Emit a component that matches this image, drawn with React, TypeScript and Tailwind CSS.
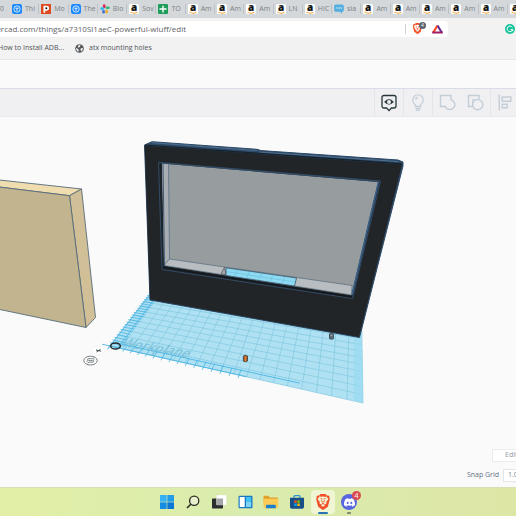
import React from "react";
import {SiBrave, SiDiscord} from "react-icons/si";

interface Tab {
    icon: "amazon" | "tinker" | "patreon" | "slack" | "sheets" | "chat";
    title: string;
}

const tabs: Tab[] = [
    {icon: "tinker", title: "Thi"},
    {icon: "patreon", title: "Mo"},
    {icon: "tinker", title: "The"},
    {icon: "slack", title: "Blo"},
    {icon: "amazon", title: "Sov"},
    {icon: "sheets", title: "TO"},
    {icon: "amazon", title: "Am"},
    {icon: "amazon", title: "Am"},
    {icon: "amazon", title: "Am"},
    {icon: "amazon", title: "LN"},
    {icon: "amazon", title: "HIC"},
    {icon: "chat", title: "sla"},
    {icon: "amazon", title: "Am"},
    {icon: "amazon", title: "Am"},
    {icon: "amazon", title: "Am"},
    {icon: "amazon", title: "Am"},
    {icon: "amazon", title: "Am"},
    {icon: "amazon", title: "Am"},
];

function Favicon({icon}: { icon: Tab["icon"] }) {
    return (
        <svg viewBox="0 0 10 10" className="w-[10px] h-[10px] shrink-0 overflow-visible">
            {icon === "amazon" && (
                <>
                    <rect width="10" height="10" rx="1.5" fill="#fff"/>
                    <text x="5" y="7" fontSize="10" fontWeight="800" textAnchor="middle" fontFamily="Open Sans, sans-serif" fill="#111">a</text>
                    <path d="M1.4 7.9 Q5 10.4 8.4 8.1" stroke="#f5a13a" strokeWidth="1.1" fill="none"/>
                </>
            )}
            {icon === "tinker" && (
                <>
                    <rect width="10" height="10" rx="2.2" fill="#1787fb"/>
                    <circle cx="5" cy="5" r="3.2" fill="none" stroke="#fff" strokeWidth=".8"/>
                    <path d="M3.4 4.2h3.2M5 4.2v2.7" stroke="#fff" strokeWidth=".9"/>
                </>
            )}
            {icon === "patreon" && (
                <>
                    <rect width="10" height="10" fill="#dd4a22"/>
                    <path d="M2.5 1.8h3.2a2.4 2.4 0 0 1 0 4.9H4.2v2H2.5z" fill="#fff"/>
                    <circle cx="5.3" cy="4.2" r="1" fill="#111"/>
                </>
            )}
            {icon === "slack" && (
                <g strokeWidth="2.6" strokeLinecap="round">
                    <path d="M4.2 1.6v1.4" stroke="#e0234f"/>
                    <path d="M1.6 4.6h1.4" stroke="#36b9e8"/>
                    <path d="M6.9 3.8h1.6" stroke="#2fb67c"/>
                    <path d="M6.6 6.8v1.4" stroke="#ecb22e"/>
                    <path d="M3.6 7.3v1" stroke="#3f6fd8"/>
                </g>
            )}
            {icon === "sheets" && (
                <>
                    <rect width="10" height="10" rx="1" fill="#1e9e5a"/>
                    <path d="M1.5 5h7M5 1.8v6.6" stroke="#fff" strokeWidth="1.4"/>
                </>
            )}
            {icon === "chat" && (
                <>
                    <path d="M1.5.5h7Q9.8.5 9.8 2v4.2q0 1.5-1.3 1.5H8v2L5.8 7.7H1.5Q.2 7.7.2 6.2V2Q.2.5 1.5.5z" fill="#55aee0"/>
                    <path d="M2.5 3l1 1-1 1M4.6 3l1 1-1 1M6.6 3l1 1-1 1" stroke="#e4f3fb" strokeWidth=".8" fill="none"/>
                </>
            )}
        </svg>
    );
}

function TabStrip() {
    return (
        <div className="h-[18px] bg-[#d4d8db] flex overflow-hidden text-[7px] text-[#7b8084]">
            <div className="w-[9px] shrink-0 flex items-center">0</div>
            <div className="flex flex-1 min-w-0 -mr-5">
                {tabs.map((tab, i) => (
                    <button key={i} className="flex-1 basis-0 min-w-0 flex items-center gap-[3px] pl-[3px] relative">
                        {i > 0 && <span className="absolute left-0 top-1 bottom-1 w-px bg-[#bcc1c5]"></span>}
                        <Favicon icon={tab.icon}/>
                        <span className="whitespace-nowrap">{tab.title}</span>
                    </button>
                ))}
            </div>
        </div>
    );
}

function AddressBar() {
    return (
        <div className="h-[21px] bg-[#f2f2f2] flex items-center">
            <div className="flex-1 h-4 bg-white rounded-r-sm flex items-center justify-between pr-[5px]">
                <div className="w-[186px] flex justify-end overflow-hidden whitespace-nowrap text-[8px] text-[#5f6367]">
                    <span>ercad.com/things/a7310Sl1aeC-powerful-wluff/edit</span>
                </div>
                <div className="flex items-center gap-[6px]">
                    <span className="w-px h-[10px] bg-[#cfd2d4]"></span>
                    <button className="relative w-[14px]" aria-label="Brave Shields">
                        <SiBrave className="w-[11px] h-[11px] text-[#f4532a]"/>
                        <span className="absolute right-0 -top-px w-[7px] h-[7px] rounded-full bg-[#59636d] text-white text-[5px] leading-[7px] text-center">4</span>
                    </button>
                    <button aria-label="Rewards">
                        <svg viewBox="0 0 11 10" className="w-[11px] h-[10px]">
                            <path d="M5.5 1.500L1.200 8.600" stroke="#ff4724" strokeWidth="2.100"/>
                            <path d="M5.500 1.500l4.300 7.100" stroke="#662d91" strokeWidth="2.100"/>
                            <path d="M.2 8.500h10.600" stroke="#9e1f63" strokeWidth="2"/>
                        </svg>
                    </button>
                </div>
            </div>
            <div className="w-[68px] flex justify-end pr-px">
                <svg viewBox="0 0 10 10" className="w-[10px] h-[10px]">
                    <circle cx="5" cy="5" r="5" fill="#15c39a"/>
                    <path d="M7.3 3.3A2.8 2.8 0 1 0 7.7 5.6H5.6M7.7 5.6v1.6" stroke="#fff" strokeWidth="1" fill="none"/>
                </svg>
            </div>
        </div>
    );
}

function Bookmarks() {
    return (
        <div className="h-[21px] bg-[#f2f2f2] border-b border-[#e6e7e8] flex items-center pb-px text-[7px] text-[#4f5357]">
            <a href="#adb" className="w-16 whitespace-nowrap flex justify-end">How to Install ADB...</a>
            <a href="#atx" className="ml-[11px] flex items-center gap-[5px] whitespace-nowrap">
                <svg viewBox="0 0 10 10" className="w-[9px] h-[9px]">
                    <circle cx="5" cy="5" r="4.8" fill="#555a5f"/>
                    <path d="M1.2 4.2L4 6.2v2.4Q1 7.8 1.2 4.2zM4 1.2l2.2.3L5 3.6 3 4zM6.6 4.6l2.2-.2Q8.8 7 7 8.2L6 6z" fill="#f2f2f2"/>
                </svg>
                atx mounting holes
            </a>
        </div>
    );
}

function EditorToolbar() {
    return (
        <div className="h-[29px] bg-[#f0f0f2] border-t border-b border-t-[#d9dbe6] border-b-[#e9e9ec] flex justify-end overflow-hidden text-[#c3cdd8]">
            <div className="flex -mr-[3px]">
                <button className="w-[29px] border-l border-[#e3e5e9] flex items-center justify-center" aria-label="Notes">
                    <svg viewBox="0 0 16 18" className="w-4 h-[18px]" fill="none" stroke="#27373a" strokeWidth="1.3">
                        <path d="M3 1.5h10q2 0 2 2v8.5q0 2-2 2h-2.6L8 16.6 5.600 14H3q-2 0-2-2V3.500q0-2 2-2z"/>
                        <path d="M3.500 7.900Q8 3 12.500 7.900 8 12.600 3.500 7.900z" fill="#27373a" strokeWidth=".6"/>
                        <circle cx="8" cy="7.900" r="2" fill="#f0f0f2" stroke="none"/>
                    </svg>
                </button>
                <button className="w-[29px] border-l border-[#e3e5e9] flex items-center justify-center" aria-label="Hints">
                    <svg viewBox="0 0 14 18" className="w-[14px] h-[18px]" fill="none" stroke="currentColor" strokeWidth="1.3">
                        <path d="M4.500 12.500Q4.500 10.500 3 9.400A5.200 5.200 0 1 1 11 9.400Q9.500 10.500 9.500 12.500z"/>
                        <path d="M4.500 14.500h5M5.200 16.400h3.600M4.500 5.500Q5 3.800 6.700 3.500"/>
                    </svg>
                </button>
                <button className="w-[29px] border-l border-[#e3e5e9] flex items-center justify-center" aria-label="Group">
                    <svg viewBox="0 0 17 17" className="w-[17px] h-[17px]" fill="none" stroke="currentColor" strokeWidth="1.4">
                        <path d="M1.500 1.500h10.500v4.200A5 5 0 1 1 6.200 12.500H1.500z"/>
                    </svg>
                </button>
                <button className="w-[29px] flex items-center justify-center" aria-label="Ungroup">
                    <svg viewBox="0 0 17 17" className="w-[17px] h-[17px]" fill="none" stroke="currentColor" strokeWidth="1.4">
                        <path d="M5.500 12.500H1.500v-11h10.500v4"/>
                        <path d="M5.500 12.500V5.500H12" strokeWidth=".8"/>
                        <circle cx="10.700" cy="10.700" r="5.100"/>
                    </svg>
                </button>
                <button className="w-[29px] border-l border-[#e3e5e9] flex items-center justify-center" aria-label="Align">
                    <svg viewBox="0 0 14 17" className="w-[14px] h-[17px]" fill="none" stroke="currentColor" strokeWidth="1.400">
                        <path d="M1.200.5v16M4.200 3h8.600v4.200H4.200zM4.200 10.300h5v3.400h-5z"/>
                    </svg>
                </button>
            </div>
        </div>
    );
}

// perspective mapping of the unit square onto the workplane corners
function project(u: number, v: number) {
    const g = -0.218;
    const h = 0.358;
    const w = 1 + g * u + h * v;
    const x = (110 + (363 * (1 + g) - 110) * u + (175 * (1 + h) - 110) * v) / w;
    const y = (346 + (403 * (1 + g) - 346) * u + (262 * (1 + h) - 346) * v) / w;
    return `${x.toFixed(2)} ${y.toFixed(2)}`;
}

function gridPath(count: number) {
    let d = "";
    for (let i = 0; i <= count; i++) {
        const t = i / count;
        d += `M${project(t, 0)}L${project(t, 1)}M${project(0, t)}L${project(1, t)}`;
    }
    return d;
}

function rulerPath() {
    let d = "";
    for (let i = 0; i < 40; i++) {
        const t = i / 40;
        d += `M${project(-0.01, t)}L${project(0.05, t)}`;
    }
    for (let i = 0; i < 17; i++) {
        const t = i / 28;
        d += `M${project(t, -0.02)}L${project(t, 0.04)}`;
    }
    return d;
}

function Scene() {
    return (
        <svg viewBox="0 117 516 370" className="block w-full h-auto">
            {/* workplane */}
            <path d={`M${project(0, 0)}L${project(1, 0)}L${project(1, 1)}L${project(0, 1)}z`} fill="#b2e3f4"/>
            <path d={gridPath(80)} stroke="#8bd0e8" strokeWidth=".3" opacity=".3"/>
            <path d={gridPath(20)} stroke="#7cc4dd" strokeWidth=".6"/>
            <path d={rulerPath()} stroke="#4bb5e3" strokeWidth=".8"/>
            <path d={`M${project(-0.04, 0)}L${project(0.6, 0)}M${project(0, -0.03)}L${project(0, 1)}M${project(0.04, 0.035)}L${project(0.79, 0.035)}M${project(0.04, 0.035)}L${project(0.04, 1)}`} stroke="#3fb0e2" strokeWidth=".8"/>
            <path d={`M${project(0.97, 0)}L${project(1, 0)}L${project(1, 1)}L${project(0.97, 1)}z`} fill="#9adcf1" opacity=".7"/>
            <text transform="translate(120 346) rotate(10) skewX(-28)" fontSize="13" fontWeight="600" fontFamily="Open Sans, sans-serif" fill="#6dbad6" opacity=".7">Workplane</text>

            {/* block on the left */}
            <g stroke="#566b7b" strokeWidth=".9" strokeLinejoin="round">
                <path d="M-5 179.500L81.500 189 69.500 195.700-5 186.500z" fill="#efddb0"/>
                <path d="M81.500 189L95.500 317.500 86 327.500 69.500 195.700z" fill="#d1c097"/>
                <path d="M-5 186.500L69.500 195.700 86 327.500-5 308.500z" fill="#c2b48e"/>
            </g>

            {/* frame */}
            <path d="M144.500 145L152 141.700 257 149.300 261 150.600 398 160 403 162 403 166 359.500 337.500 150 300z" fill="#2e4a66" stroke="#2b4866" strokeWidth="1"/>
            <path d="M144.700 145.700L402 164.500 359 337 150 299.500z" fill="#212528"/>
            <path d="M145 145L402 163.800" stroke="#15202a" strokeWidth="1.200"/>
            <path d="M152 142.700L257 150.600 M259 152L398 161.500" stroke="#55789a" strokeWidth=".8"/>
            <path d="M158.500 162.400L380.500 181 352.500 298.500 162 269.500z" fill="#1d2429" stroke="#34506d" strokeWidth=".9"/>
            <path d="M162 163.500L378 182 351.500 295 164.500 265.500z" fill="#979c9f"/>
            <path d="M162 163.500L168.500 164.200 169.500 259 164 265.500z" fill="#a8adb1"/>
            <path d="M168.500 164.200L169.500 259" stroke="#5a7189" strokeWidth=".8"/>
            <path d="M169.500 259L352 285.500 351.500 295 164 265.500z" fill="#b7bdc1" stroke="#566b7b" strokeWidth=".7"/>
            <path d="M224.500 267L226 274.600 221 274z" fill="#aba9a7" stroke="#4b5864" strokeWidth=".7"/>
            <path d="M226 267.800L296.500 278 294.500 286 226 275.500z" fill="#8edaf2" stroke="#3a5268" strokeWidth=".8"/>
            <path d="M226 271.500L295 282M238 269.500l-4 7M250 271.300l-4 7M262 273l-4 7M273 274.700l-3 7M285 276.500l-3 7" stroke="#60b9d6" strokeWidth=".5"/>
            <path d="M378.500 182L352 295" stroke="#3b6289" strokeWidth="1.500"/>
            <path d="M161 163L379 181.500M163 163.500L164.500 266" stroke="#34506d" strokeWidth=".9"/>
            <path d="M163 267.500L352 297" stroke="#15191c" strokeWidth="1.500"/>

            {/* loose parts */}
            <g stroke="#3c3a3c" strokeWidth=".8">
                <path d="M243.300 356q2-1.500 4.200 0v5q-2 1.600-4.200 0z" fill="#b0622b"/>
                <path d="M329.500 334q2-1.300 4 0v4.500q-2 1.300-4 0z" fill="#5b7185"/>
            </g>
            <path d="M245.500 356v5.500" stroke="#e07a2b" strokeWidth="1"/>
            <path d="M330.500 335.300h2.200" stroke="#a9bccb" strokeWidth=".8"/>

            {/* ruler origin handles */}
            <ellipse cx="115.500" cy="346" rx="4.800" ry="3.100" fill="none" stroke="#22292d" strokeWidth="1.500"/>
            <ellipse cx="98" cy="350.500" rx="6.500" ry="4.200" fill="#fff" stroke="#efefef" strokeWidth=".6"/>
            <path d="M96 350l5 1.200M100.500 349.300l-4 2.700" stroke="#30383c" strokeWidth=".9"/>
            <g fill="none" stroke="#697074" strokeWidth=".9">
                <ellipse cx="90.500" cy="360.600" rx="6.700" ry="4.400" fill="#fff"/>
                <path d="M87 359.500q2-1.500 3.500-.8t3.500-.8M86.500 361.300q2-1.500 4-.8t4-.8M87.500 363q2-1.500 3.500-.8t3-.8"/>
            </g>
        </svg>
    );
}

function Workspace() {
    return (
        <main className="flex-1 relative overflow-hidden bg-[#fafafa]">
            <Scene/>
            <div className="absolute bottom-[5px] -right-9 flex flex-col items-end gap-[7px] text-[7px] text-[#5f7188]">
                <button className="w-[60px] h-[13px] bg-white border border-[#e9ebed] pl-3 text-left text-[#8c98a5]">Edit Grid</button>
                <div className="flex items-center gap-1">
                    <label htmlFor="snap-grid">Snap Grid</label>
                    <select id="snap-grid" className="w-[49px] h-[13px] bg-white border border-[#e3e5e8] pl-1 appearance-none text-[#7d8794]">
                        <option>1.0 mm</option>
                    </select>
                </div>
            </div>
        </main>
    );
}

function TaskButton({label, active, children}: { label: string; active?: boolean; children: React.ReactNode }) {
    return (
        <button
            aria-label={label}
            className={active
                ? "w-6 h-6 rounded-sm bg-[#f0f5d3] flex items-center justify-center relative"
                : "w-6 h-6 flex items-center justify-center relative"}
        >
            {children}
        </button>
    );
}

function Taskbar() {
    return (
        <footer className="h-[29px] bg-linear-to-r from-[#e2efa6] via-[#d9ecae] to-[#dee6a5] border-t border-[#d5e2b5] flex items-center justify-center gap-[2px]">
            <TaskButton label="Start">
                <svg viewBox="0 0 14 14" className="w-[14px] h-[14px]">
                    <path d="M0 0h6.700v6.700H0z" fill="#35b0f2"/>
                    <path d="M7.300 0H14v6.700H7.300z" fill="#229be8"/>
                    <path d="M0 7.300h6.700V14H0z" fill="#168de0"/>
                    <path d="M7.300 7.300H14V14H7.300z" fill="#0a78d4"/>
                </svg>
            </TaskButton>
            <TaskButton label="Search">
                <svg viewBox="0 0 14 14" className="w-[14px] h-[14px]" fill="none" stroke="#2a2d24">
                    <circle cx="8.200" cy="5.700" r="4.600" strokeWidth="1.300" fill="#e9f0cd"/>
                    <path d="M4.800 9.200L1 13" strokeWidth="1.600"/>
                </svg>
            </TaskButton>
            <TaskButton label="Task View">
                <svg viewBox="0 0 15 14" className="w-[15px] h-[14px]">
                    <rect x="0" y="3.500" width="11" height="10" rx=".8" fill="#2b2d2f"/>
                    <rect x="4.500" y="0" width="10" height="10" rx=".8" fill="#fff" stroke="#dfe3d8" strokeWidth=".4"/>
                    <rect x="4.500" y="3.500" width="6.500" height="6.500" fill="#a3a6a6"/>
                </svg>
            </TaskButton>
            <TaskButton label="Widgets">
                <svg viewBox="0 0 15 14" className="w-[15px] h-[14px]">
                    <rect x=".5" y=".8" width="14" height="12.500" rx="1" fill="#1878c4"/>
                    <rect x="1.700" y="2" width="5" height="10" fill="#fff"/>
                    <rect x="8" y="2" width="5.200" height="4.500" fill="#3fc1f5"/>
                    <rect x="8" y="6.500" width="5.200" height="5.500" fill="#7bd6f8"/>
                </svg>
            </TaskButton>
            <TaskButton label="File Explorer">
                <svg viewBox="0 0 16 14" className="w-4 h-[14px]">
                    <path d="M.5 1.800Q.5.800 1.500.800H5.500L7 2.500h7q1 0 1 1V8H.5z" fill="#e0a12c"/>
                    <path d="M.5 3.800H15.300v8.200q0 1.200-1.200 1.200H1.700Q.5 13.200.5 12z" fill="#fccb55"/>
                    <path d="M3 13.200v-2.500q0-1 1-1h7.800q1 0 1 1v2.500z" fill="#1c7fcb"/>
                </svg>
            </TaskButton>
            <TaskButton label="Store">
                <svg viewBox="0 0 14 14" className="w-[14px] h-[14px]">
                    <path d="M4 3V1.600Q4 .7 5 .7h4q1 0 1 .9V3" fill="none" stroke="#2b8fd4" strokeWidth="1.200"/>
                    <path d="M0 2.800H14V12q0 1.800-1.800 1.800H1.800Q0 13.800 0 12z" fill="#174f89"/>
                    <path d="M4.200 5.400h2.500v2.500H4.200z" fill="#f25022"/>
                    <path d="M7.300 5.400h2.500v2.500H7.300z" fill="#7fba00"/>
                    <path d="M4.200 8.500h2.500V11H4.200z" fill="#00a4ef"/>
                    <path d="M7.300 8.500h2.500V11H7.300z" fill="#ffb900"/>
                </svg>
            </TaskButton>
            <TaskButton label="Brave" active>
                <SiBrave className="w-4 h-4 text-[#f2502a]"/>
                <span className="absolute bottom-0 w-[10px] h-[2px] rounded-full bg-[#2673b8]"></span>
            </TaskButton>
            <TaskButton label="Discord">
                <span className="w-4 h-4 rounded-full bg-[#5865e0] flex items-center justify-center">
                    <SiDiscord className="w-[11px] h-[11px] text-white"/>
                </span>
                <span className="absolute right-0 top-px w-[9px] h-[9px] rounded-full bg-[#dc4a50] text-white text-[7px] leading-[9px] text-center">4</span>
                <span className="absolute bottom-0 w-1 h-[2px] rounded-full bg-[#7e8569]"></span>
            </TaskButton>
        </footer>
    );
}

function App() {
    return (
        <div className="min-h-screen flex flex-col overflow-hidden bg-[#fafafa] font-['Open_Sans',sans-serif]">
            <TabStrip/>
            <AddressBar/>
            <Bookmarks/>
            <div className="h-7 bg-[#fafafa]"></div>
            <EditorToolbar/>
            <Workspace/>
            <Taskbar/>
        </div>
    );
}

export default App;
